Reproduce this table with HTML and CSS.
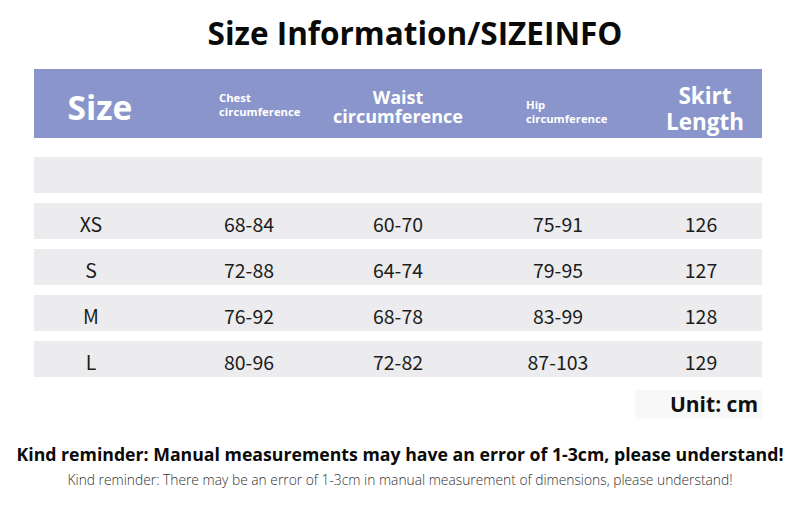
FILE: index.html
```html
<!DOCTYPE html>
<html>
<head>
<meta charset="utf-8">
<link rel="stylesheet" href="styles.css">
</head>
<body>
<div class="page">
  <h1 class="title">Size Information/SIZEINFO</h1>
  <div class="table">
    <div class="head">
      <div class="h h-size">Size</div>
      <div class="h h-chest">Chest<br>circumference</div>
      <div class="h h-waist">Waist<br>circumference</div>
      <div class="h h-hip">Hip<br>circumference</div>
      <div class="h h-skirt">Skirt<br>Length</div>
    </div>
    <div class="row empty"></div>
    <div class="row"><span>XS</span><span>68-84</span><span>60-70</span><span>75-91</span><span>126</span></div>
    <div class="row"><span>S</span><span>72-88</span><span>64-74</span><span>79-95</span><span>127</span></div>
    <div class="row"><span>M</span><span>76-92</span><span>68-78</span><span>83-99</span><span>128</span></div>
    <div class="row"><span>L</span><span>80-96</span><span>72-82</span><span>87-103</span><span>129</span></div>
  </div>
  <div class="unit-wrap"><div class="unit">Unit: cm</div></div>
  <p class="remind-bold">Kind reminder: Manual measurements may have an error of 1-3cm, please understand!</p>
  <p class="remind-light">Kind reminder: There may be an error of 1-3cm in manual measurement of dimensions, please understand!</p>
</div>
</body>
</html>
```
FILE: styles.css
```css
html, body {
  margin: 0;
  padding: 0;
  background: #ffffff;
}
.page {
  width: 800px;
  height: 513px;
  font-family: "Open Sans", "Noto Sans", sans-serif;
  color: #111;
  overflow: hidden;
}
.title {
  margin: 0;
  padding-top: 13px;
  height: 69px;
  box-sizing: border-box;
  text-align: center;
  font-size: 31.5px;
  font-weight: 700;
  line-height: 40px;
  color: #0a0a0a;
  padding-left: 30px;
}
.table {
  margin: 0 38px 0 34px;
  display: flex;
  flex-direction: column;
  gap: 10px;
}
.head, .row {
  display: grid;
  grid-template-columns: 114px 202px 96px 224px 62px;
  padding-right: 30px;
  align-items: center;
}
.head {
  background: #8a96cb;
  height: 69px;
  color: #fff;
  font-weight: 700;
  margin-bottom: 9px;
}
.h {
  display: flex;
  flex-direction: column;
  justify-content: center;
}
.h-size {
  font-size: 33.5px;
  align-items: center;
  padding-left: 18px;
  line-height: 40px;
  padding-top: 6px;
}
.h-chest, .h-hip {
  font-size: 11.3px;
  line-height: 14px;
}
.h-chest { padding-left: 71px; white-space: nowrap; padding-top: 3px; }
.h-hip { padding-left: 80px; white-space: nowrap; padding-top: 16px; }
.h-waist {
  font-size: 18px;
  line-height: 19px;
  text-align: center;
  align-items: center;
  white-space: nowrap;
  padding-top: 6px;
}
.h-skirt {
  font-size: 22.5px;
  line-height: 26px;
  text-align: center;
  align-items: center;
  white-space: nowrap;
  padding-left: 8px;
  padding-top: 10px;
}
.row {
  background: #ececee;
  height: 36px;
  font-family: "Noto Sans CJK SC", "Noto Sans", sans-serif;
  font-size: 19.5px;
  color: #1c1c1c;
}
.row span {
  text-align: center;
  padding-top: 5px;
}
.unit-wrap {
  display: flex;
  justify-content: flex-end;
  padding-right: 38px;
  margin-top: 13px;
}
.unit {
  background: #f8f8f8;
  width: 127px;
  height: 29px;
  box-sizing: border-box;
  text-align: right;
  padding-right: 4px;
  font-weight: 700;
  font-size: 21px;
  line-height: 29px;
  color: #111;
}
.remind-bold {
  margin: 23px 0 0;
  text-align: center;
  font-weight: 700;
  font-size: 17.7px;
  line-height: 24px;
  color: #0a0a0a;
}
.remind-light {
  margin: 5px 0 0;
  text-align: center;
  font-weight: 300;
  font-size: 13.8px;
  line-height: 18px;
  color: #333;
}
```
